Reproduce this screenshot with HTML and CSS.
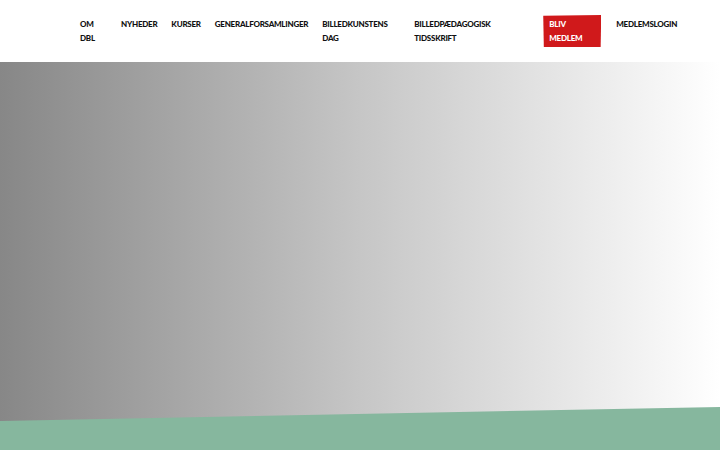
FILE: index.html
```html
<!DOCTYPE html>
<html lang="da">
<head>
<meta charset="utf-8">
<title>Danmarks Billedkunstlærere</title>
<link rel="stylesheet" href="styles.css">
</head>
<body>
<header class="site-header">
  <nav class="main-nav">
    <ul class="nav-list">
      <li class="nav-item w-om"><a href="#">Om DBL</a></li>
      <li class="nav-item"><a href="#">Nyheder</a></li>
      <li class="nav-item"><a href="#">Kurser</a></li>
      <li class="nav-item"><a href="#">Generalforsamlinger</a></li>
      <li class="nav-item w-dag"><a href="#">Billedkunstens dag</a></li>
      <li class="nav-item w-tids"><a href="#">Billedpædagogisk tidsskrift</a></li>
      <li class="nav-item nav-cta"><a href="#">Bliv medlem</a></li>
      <li class="nav-item"><a href="#">Medlemslogin</a></li>
    </ul>
  </nav>
</header>
<main>
  <section class="hero"></section>
</main>
</body>
</html>
```
FILE: styles.css
```css
html, body {
  margin: 0;
  padding: 0;
  background: #fff;
}

body {
  font-family: Lato, "Open Sans", sans-serif;
}

.site-header {
  height: 62px;
  background: #fff;
}

.main-nav {
  padding: 17px 0 0 80px;
}

.nav-list {
  display: flex;
  align-items: flex-start;
  gap: 14px;
  list-style: none;
  margin: 0;
  padding: 0;
}

.nav-item a {
  display: block;
  color: #111;
  text-decoration: none;
  text-transform: uppercase;
  font-weight: 900;
  font-size: 8px;
  line-height: 14px;
  letter-spacing: -0.25px;
}

.w-om { width: 27px; }
.w-dag { width: 78px; }
.w-tids { width: 115px; }

.nav-cta {
  width: 58px;
  margin-top: -2px;
  margin-right: 1px;
}

.nav-cta a {
  color: #fff;
  background: #d0191b;
  padding: 2px 6px 2px 6px;
  clip-path: polygon(0 2%, 100% 0, 99% 100%, 1% 100%);
}

.hero {
  position: relative;
  height: 388px;
  background: linear-gradient(to right, #878787 0%, #c6c6c6 50%, #ffffff 100%);
  overflow: hidden;
}

.hero::after {
  content: "";
  position: absolute;
  left: 0;
  right: 0;
  bottom: 0;
  height: 43px;
  background: #86b79e;
  clip-path: polygon(0 14px, 100% 0, 100% 100%, 0 100%);
}
```
